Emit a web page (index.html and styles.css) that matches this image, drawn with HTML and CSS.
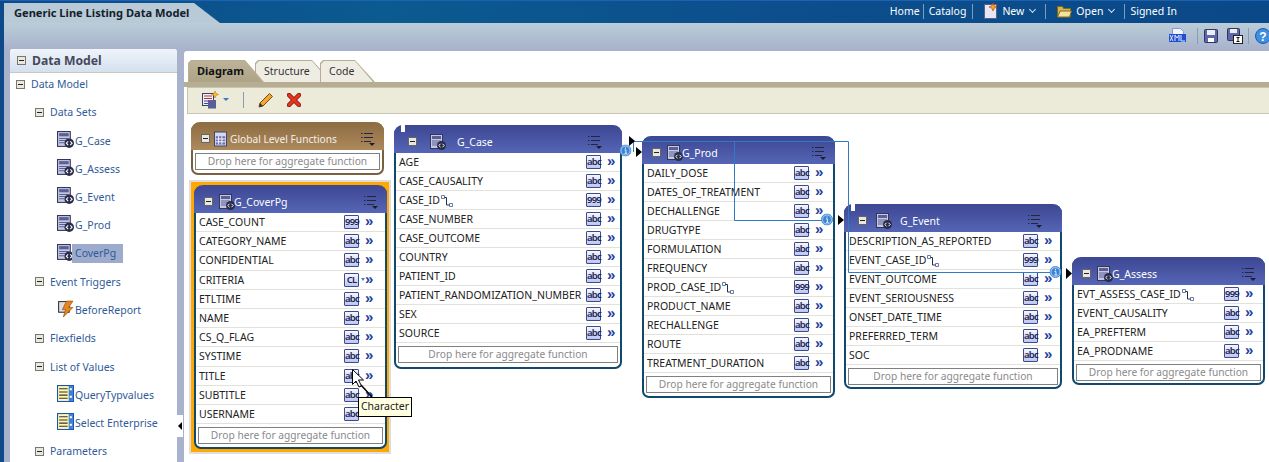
FILE: index.html
```html
<!DOCTYPE html>
<html lang="en">
<head>
  <meta charset="UTF-8" />
  <title>Generic Line Listing Data Model</title>
  <link rel="stylesheet" href="styles.css">
</head>
<body>

  <svg class="defs" width="0" height="0">
    <symbol id="i-dataset" viewBox="0 0 16 16">
      <rect x="0.500" y="0.500" width="12" height="14" fill="#c5c8e0" stroke="#34375c"/>
      <rect x="2" y="2" width="9" height="3" fill="#5a6096"/>
      <path d="M2 7h9M2 9h9M2 11h5" stroke="#5a6096"/>
      <circle cx="11.500" cy="11.500" r="4.500" fill="#2a2d4a"/>
      <path d="M10.500 9.800 8.800 11.500l1.700 1.700M12.500 9.800l1.700 1.700-1.700 1.700" fill="none" stroke="#fff"/>
    </symbol>
    <symbol id="i-menu" viewBox="0 0 14 14">
      <path d="M0 1.500h1.500M3 1.500h9M0 5.500h1.500M3 5.500h9M0 9.500h1.500M3 9.500h7" stroke="#23263f"/>
      <path d="M8 11h6l-3 3z" fill="#1c1c2a"/>
    </symbol>
    <symbol id="i-values" viewBox="0 0 16 16">
      <rect x="0.500" y="0.500" width="15" height="15" fill="#fff7b0" stroke="#1556b8"/>
      <rect x="11" y="1" width="4" height="14" fill="#3d7fd6"/>
      <path d="M2 3.500h8M2 6.500h8M2 9.500h8M2 12.500h8" stroke="#333"/>
      <path d="M12 4h2M12 11h2" stroke="#fff" stroke-width="2"/>
    </symbol>
    <symbol id="i-info" viewBox="0 0 14 14">
      <circle cx="7" cy="7" r="6.500" fill="#8fbcec" stroke="#3f82c8"/>
      <circle cx="7" cy="7" r="4.500" fill="#3a83d6"/>
      <path d="M7 3.500v1.500M5.800 6.300H7.500V10M5.800 10.300h3.200" stroke="#fff" fill="none"/>
    </symbol>
    <symbol id="i-key" viewBox="0 0 12 12">
      <path d="M.5.500h3v3h-3zM8.500 8.500h3v3h-3z" fill="#fff" stroke="#6a7aa8"/>
      <path d="M3.500 2.500h2v7.500h3" fill="none" stroke="#22304f"/>
    </symbol>
  </svg>

  <header class="topbar">
    <div class="doc-tab">Generic Line Listing Data Model</div>
    <nav class="global-nav">
      <a class="nav-home">Home</a>
      <a class="nav-catalog">Catalog</a>
      <a class="with-icon">
        <svg width="14" height="16" viewBox="0 0 14 16"><path d="M.5 1.500h12v14H.5z" fill="#e6e6f4" stroke="#5a5f8c"/><path d="M9 0l1.200 2.800L13 4l-2.800 1.200L9 8 7.800 5.200 5 4l2.800-1.200z" fill="#f4a51c" stroke="#b23a1a" stroke-width=".6"/></svg>
        New <span class="caret"></span>
      </a>
      <a class="with-icon">
        <svg width="15" height="13" viewBox="0 0 15 13"><path d="M.5 12V1.500h5l1 2h7V12z" fill="#d8b64c" stroke="#7d6a24"/><path d="M.5 12l2.500-6h11.500l-2 6z" fill="#f3e39a" stroke="#7d6a24"/></svg>
        Open <span class="caret"></span>
      </a>
      <a class="nav-last">Signed In</a>
    </nav>
  </header>

  <div class="action-band">
    <svg class="ico-xml" width="17" height="15" viewBox="0 0 17 15"><path d="M3.500.5h8l3 3v4h-11z" fill="#f2f4fb" stroke="#8d97c8"/><rect x="0" y="6" width="17" height="8" fill="#1f4fd0"/><path d="M1 7l3 6M4 7l-3 6M6 13V7l2 3 2-3v6M12 7v6h4" stroke="#dfe8ff" fill="none"/></svg>
    <span class="band-sep"></span>
    <svg class="ico-save" width="14" height="14" viewBox="0 0 14 14"><rect x=".5" y=".5" width="13" height="13" rx="1" fill="#6066aa" stroke="#30345e"/><rect x="3" y="1" width="8" height="5" fill="#eceef8"/><rect x="4" y="9" width="6" height="4" fill="#fff"/></svg>
    <svg class="ico-saveas" width="16" height="16" viewBox="0 0 16 16"><rect x=".5" y=".5" width="12" height="12" rx="1" fill="#6066aa" stroke="#30345e"/><rect x="3" y="1" width="7" height="4" fill="#eceef8"/><rect x="6.500" y="7.500" width="9" height="8" fill="#fff" stroke="#222"/><path d="M9.500 9.500h3M11 9.500v4M9.500 13.500h3" stroke="#111"/></svg>
    <span class="band-sep"></span>
    <svg class="ico-help" width="15" height="16" viewBox="0 0 15 16"><circle cx="8" cy="8" r="7.500" fill="#3f8ee0" stroke="#1e5ca8"/><text x="8" y="12.500" text-anchor="middle" class="help-q">?</text></svg>
  </div>

  <div class="workspace">
    <aside class="side-panel">
      <h2 class="panel-head"><span class="box"></span>Data Model</h2>
      <ul class="tree">
        <li class="lvl0"><span class="box"></span>Data Model</li>
        <li class="lvl1"><span class="box"></span>Data Sets</li>
        <li class="lvl2"><svg><use href="#i-dataset"/></svg><span>G_Case</span></li>
        <li class="lvl2"><svg><use href="#i-dataset"/></svg><span>G_Assess</span></li>
        <li class="lvl2"><svg><use href="#i-dataset"/></svg><span>G_Event</span></li>
        <li class="lvl2"><svg><use href="#i-dataset"/></svg><span>G_Prod</span></li>
        <li class="lvl2"><svg><use href="#i-dataset"/></svg><span class="selected">CoverPg</span></li>
        <li class="lvl1"><span class="box"></span>Event Triggers</li>
        <li class="lvl2">
          <svg viewBox="0 0 16 16"><rect x="1.500" y="1.500" width="10" height="10" fill="#dcdcec" stroke="#333"/><path d="M9 1h6l-4 6h4L6 16l2-7H5z" fill="#e8861c" stroke="#8a4a10" stroke-width=".6"/></svg>
          <span>BeforeReport</span>
        </li>
        <li class="lvl1"><span class="box"></span>Flexfields</li>
        <li class="lvl1"><span class="box"></span>List of Values</li>
        <li class="lvl2"><svg><use href="#i-values"/></svg><span>QueryTypvalues</span></li>
        <li class="lvl2"><svg><use href="#i-values"/></svg><span>Select Enterprise</span></li>
        <li class="lvl1"><span class="box"></span>Parameters</li>
      </ul>
    </aside>
    <div class="splitter"><span class="collapse-tab"></span></div>

    <main class="editor">
      <div class="tabs">
        <a class="tab active">Diagram</a>
        <a class="tab">Structure</a>
        <a class="tab">Code</a>
      </div>
      <div class="toolbar">
        <svg width="17" height="18" viewBox="0 0 17 18"><rect x=".5" y="2.500" width="11" height="12" fill="#eef0fa" stroke="#3c3f66"/><path d="M2 5h8M2 7.500h8" stroke="#c03030"/><path d="M2 10h8M2 12.500h8" stroke="#3050a0"/><rect x="6" y="9" width="8" height="8.500" fill="#5a6096"/><path d="M13 0l1 2.500 2.500 1-2.500 1-1 2.500-1-2.500-2.500-1 2.500-1z" fill="#f8c21c" stroke="#c06a10" stroke-width=".5"/></svg>
        <span class="caret blue"></span>
        <span class="tool-sep"></span>
        <svg class="ico-pencil" width="16" height="16" viewBox="0 0 16 16"><path d="M1 15l1-4L11.500 1.500l3 3L5 14z" fill="#f0a830" stroke="#7a4a10"/><path d="M1 15l1-4 3 3z" fill="#333"/></svg>
        <svg class="ico-delete" width="14" height="14" viewBox="0 0 14 14"><path d="M2 2l10 10M12 2L2 12" stroke="#7a1410" stroke-width="4.500" stroke-linecap="round"/><path d="M2 2l10 10M12 2L2 12" stroke="#e8341c" stroke-width="3" stroke-linecap="round"/></svg>
      </div>

      <div class="canvas">
        <section class="node brown global-fn">
          <header class="node-head">
            <span class="box"></span>
            <svg class="head-ico" viewBox="0 0 14 16"><rect x=".5" y=".5" width="13" height="15" fill="#d5d8f0" stroke="#3c3f66"/><rect x="2" y="5" width="10" height="9" fill="#6a70b0"/><path d="M5 5v9M8.500 5v9M2 8h10M2 11h10" stroke="#fff"/></svg>
            <span class="node-title">Global Level Functions</span>
            <svg class="menu"><use href="#i-menu"/></svg>
          </header>
          <div class="drop">Drop here for aggregate function</div>
        </section>

        <div class="cover-halo"></div>
        <section class="node cover">
          <header class="node-head">
            <span class="box"></span>
            <svg class="head-ico"><use href="#i-dataset"/></svg>
            <span class="node-title">G_CoverPg</span>
            <svg class="menu"><use href="#i-menu"/></svg>
          </header>
          <ul class="fields">
            <li><span class="fname">CASE_COUNT</span><span class="type">999</span></li>
            <li><span class="fname">CATEGORY_NAME</span><span class="type">abc</span></li>
            <li><span class="fname">CONFIDENTIAL</span><span class="type">abc</span></li>
            <li><span class="fname">CRITERIA</span><span class="type cl">CL</span></li>
            <li><span class="fname">ETLTIME</span><span class="type">abc</span></li>
            <li><span class="fname">NAME</span><span class="type">abc</span></li>
            <li><span class="fname">CS_Q_FLAG</span><span class="type">abc</span></li>
            <li><span class="fname">SYSTIME</span><span class="type">abc</span></li>
            <li><span class="fname">TITLE</span><span class="type">abc</span></li>
            <li><span class="fname">SUBTITLE</span><span class="type">abc</span></li>
            <li><span class="fname">USERNAME</span><span class="type">abc</span></li>
          </ul>
          <div class="drop">Drop here for aggregate function</div>
        </section>

        <section class="node case">
          <header class="node-head wide">
            <span class="box"></span>
            <svg class="head-ico"><use href="#i-dataset"/></svg>
            <span class="node-title">G_Case</span>
            <svg class="menu"><use href="#i-menu"/></svg>
          </header>
          <ul class="fields">
            <li><span class="fname">AGE</span><span class="type">abc</span></li>
            <li><span class="fname">CASE_CAUSALITY</span><span class="type">abc</span></li>
            <li><span class="fname">CASE_ID<svg class="key"><use href="#i-key"/></svg></span><span class="type">999</span></li>
            <li><span class="fname">CASE_NUMBER</span><span class="type">abc</span></li>
            <li><span class="fname">CASE_OUTCOME</span><span class="type">abc</span></li>
            <li><span class="fname">COUNTRY</span><span class="type">abc</span></li>
            <li><span class="fname">PATIENT_ID</span><span class="type">abc</span></li>
            <li><span class="fname">PATIENT_RANDOMIZATION_NUMBER</span><span class="type">abc</span></li>
            <li><span class="fname">SEX</span><span class="type">abc</span></li>
            <li><span class="fname">SOURCE</span><span class="type">abc</span></li>
          </ul>
          <div class="drop">Drop here for aggregate function</div>
        </section>

        <section class="node prod">
          <header class="node-head">
            <span class="box"></span>
            <svg class="head-ico"><use href="#i-dataset"/></svg>
            <span class="node-title">G_Prod</span>
            <svg class="menu"><use href="#i-menu"/></svg>
          </header>
          <ul class="fields">
            <li><span class="fname">DAILY_DOSE</span><span class="type">abc</span></li>
            <li><span class="fname">DATES_OF_TREATMENT</span><span class="type">abc</span></li>
            <li><span class="fname">DECHALLENGE</span><span class="type">abc</span></li>
            <li><span class="fname">DRUGTYPE</span><span class="type">abc</span></li>
            <li><span class="fname">FORMULATION</span><span class="type">abc</span></li>
            <li><span class="fname">FREQUENCY</span><span class="type">abc</span></li>
            <li><span class="fname">PROD_CASE_ID<svg class="key"><use href="#i-key"/></svg></span><span class="type">999</span></li>
            <li><span class="fname">PRODUCT_NAME</span><span class="type">abc</span></li>
            <li><span class="fname">RECHALLENGE</span><span class="type">abc</span></li>
            <li><span class="fname">ROUTE</span><span class="type">abc</span></li>
            <li><span class="fname">TREATMENT_DURATION</span><span class="type">abc</span></li>
          </ul>
          <div class="drop">Drop here for aggregate function</div>
        </section>

        <section class="node event">
          <header class="node-head wide">
            <span class="box"></span>
            <svg class="head-ico"><use href="#i-dataset"/></svg>
            <span class="node-title">G_Event</span>
            <svg class="menu"><use href="#i-menu"/></svg>
          </header>
          <ul class="fields">
            <li><span class="fname">DESCRIPTION_AS_REPORTED</span><span class="type">abc</span></li>
            <li><span class="fname">EVENT_CASE_ID<svg class="key"><use href="#i-key"/></svg></span><span class="type">999</span></li>
            <li><span class="fname">EVENT_OUTCOME</span><span class="type">abc</span></li>
            <li><span class="fname">EVENT_SERIOUSNESS</span><span class="type">abc</span></li>
            <li><span class="fname">ONSET_DATE_TIME</span><span class="type">abc</span></li>
            <li><span class="fname">PREFERRED_TERM</span><span class="type">abc</span></li>
            <li><span class="fname">SOC</span><span class="type">abc</span></li>
          </ul>
          <div class="drop">Drop here for aggregate function</div>
        </section>

        <section class="node assess">
          <header class="node-head">
            <span class="box"></span>
            <svg class="head-ico"><use href="#i-dataset"/></svg>
            <span class="node-title">G_Assess</span>
            <svg class="menu"><use href="#i-menu"/></svg>
          </header>
          <ul class="fields">
            <li><span class="fname">EVT_ASSESS_CASE_ID<svg class="key"><use href="#i-key"/></svg></span><span class="type">999</span></li>
            <li><span class="fname">EVENT_CAUSALITY</span><span class="type">abc</span></li>
            <li><span class="fname">EA_PREFTERM</span><span class="type">abc</span></li>
            <li><span class="fname">EA_PRODNAME</span><span class="type">abc</span></li>
          </ul>
          <div class="drop">Drop here for aggregate function</div>
        </section>

        <!-- links between data sets, viewBox is in window coordinates -->
        <svg class="links" width="1082" height="348" viewBox="187 114 1082 348">
          <path d="M633.500 152V141.500H848.500V272.500H1056M734.500 141.500V220.500H828" fill="none" stroke="#2f7cc4"/>
          <path d="M629 136l6 5-6 5zM636 147l6 5-6 5zM838 215l6 5-6 5zM1066 268l6 5.500-6 5.500z" fill="#000"/>
          <use href="#i-info" x="619.500" y="144.500" width="12" height="12"/>
          <use href="#i-info" x="821" y="213.500" width="12" height="12"/>
          <use href="#i-info" x="1049.500" y="266" width="12" height="12"/>
          <path d="M352.500 369.500v15l3.500-3.500 3 6 2.500-1-3-6h5z" fill="#fff" stroke="#000" stroke-linejoin="round"/>
          <path d="M361 385l11 12" stroke="#000" stroke-width="1.500"/>
        </svg>

        <div class="tooltip">Character</div>
      </div>
    </main>
  </div>

</body>
</html>
```

FILE: styles.css
```css
* {
  box-sizing: border-box;
}

html, body {
  margin: 0;
  height: 462px;
  overflow: hidden;
}

body {
  font-family: "Noto Sans", "DejaVu Sans", sans-serif;
  font-size: 10.5px;
  color: #111;
  background-color: #0d4a8a;
}

ul {
  list-style: none;
  margin: 0;
  padding: 0;
}

.defs {
  position: absolute;
}

/* top bar */
.topbar {
  height: 23px;
  display: flex;
  justify-content: space-between;
  background: linear-gradient(90deg, #0d4a8a 0, #0b5a90 30%, #0c4f8c 60%, #0b4888 100%);
  border-top: 1px solid #1c62b4;
}

.doc-tab {
  width: 216px;
  margin-left: 4px;
  margin-top: 2px;
  padding: 2px 0 0 10px;
  font-size: 11.1px;
  font-weight: bold;
  color: #14202c;
  background-color: #b8cad6;
  clip-path: polygon(0 0, 190px 0, 100% 100%, 0 100%);
}

.global-nav {
  display: flex;
  align-items: center;
  padding-right: 92px;
  padding-bottom: 2px;
  color: #fff;
}

.global-nav a {
  display: flex;
  align-items: center;
  gap: 4px;
  height: 15px;
  border-right: 1px solid #7d9cc0;
}

.global-nav .nav-home {
  padding: 0 3px 0 0;
}

.global-nav .nav-catalog {
  padding: 0 6px 0 5px;
}

.global-nav a.with-icon {
  padding: 0 8px 0 11px;
}

.global-nav .nav-last {
  padding-left: 5px;
  border-right: 0;
}

.caret {
  width: 5px;
  height: 5px;
  margin: -3px 2px 0 2px;
  border-right: 1px solid #cfe0f2;
  border-bottom: 1px solid #cfe0f2;
  transform: rotate(45deg);
}

.caret.blue {
  width: 0;
  height: 0;
  margin: 0;
  transform: none;
  border: 3px solid transparent;
  border-top: 3px solid #3a78c0;
  border-bottom: 0;
}

.action-band {
  height: 27px;
  margin-left: 4px;
  padding-bottom: 2px;
  display: flex;
  align-items: center;
  justify-content: flex-end;
  background: linear-gradient(180deg, #bacdd8 0, #a8b2cc 100%);
}

.band-sep {
  width: 1px;
  height: 16px;
  background-color: #8f9ab0;
}

.ico-xml {
  margin-right: 11px;
}

.ico-save {
  margin-left: 6px;
  margin-right: 9px;
}

.ico-saveas {
  margin-right: 5px;
}

.ico-help {
  margin-left: 6px;
  margin-right: -1px;
}

.help-q {
  font: bold 12px "Liberation Sans", sans-serif;
  fill: #fff;
}

/* panels */
.workspace {
  height: 412px;
  margin-left: 4px;
  display: flex;
  background-color: #a8b2cc;
}

.side-panel {
  width: 167px;
  margin-left: 6px;
  margin-top: -1px;
  background-color: #fff;
  border-radius: 3px 3px 0 0;
  overflow: hidden;
}

.panel-head {
  height: 24px;
  margin: 0;
  display: flex;
  align-items: center;
  padding-left: 7px;
  gap: 6px;
  font-size: 12.2px;
  color: #444a5c;
  background: linear-gradient(180deg, #f0f4fa 0, #d4e0ee 100%);
  border-bottom: 1px solid #c8c8b8;
}

.box {
  flex: none;
  position: relative;
  width: 9px;
  height: 9px;
  background-color: #e8e8e0;
  border: 1px solid #77776c;
}

.box::after {
  content: "";
  position: absolute;
  left: 1px;
  right: 1px;
  top: 3px;
  height: 1px;
  background-color: #222;
}

.tree {
  margin-top: -1px;
  color: #305a98;
}

.tree li {
  height: 24px;
  margin-bottom: 4.25px;
  display: flex;
  align-items: center;
}

.tree svg {
  width: 17px;
  height: 17px;
  flex: none;
  margin-top: -3px;
}

.lvl0 {
  padding-left: 6px;
  gap: 6px;
}

.lvl1 {
  padding-left: 25px;
  gap: 6px;
}

.lvl2 {
  padding-left: 47px;
  gap: 1px;
}

.selected {
  height: 19px;
  line-height: 18px;
  padding: 0 7px 0 3px;
  margin-left: -3px;
  background-color: #9dabcc;
}

.splitter {
  width: 7px;
  display: flex;
  align-items: flex-end;
}

.collapse-tab {
  position: relative;
  top: -25px;
  width: 6px;
  height: 22px;
  background-color: #fff;
}

.collapse-tab::after {
  content: "";
  position: absolute;
  left: 1px;
  top: 7px;
  border: 4px solid transparent;
  border-right: 4px solid #000;
  border-left: 0;
}

.editor {
  flex: 1;
  min-width: 0;
  margin-top: 1px;
  background-color: #fff;
  border-radius: 3px 0 0 0;
}

.tabs {
  display: flex;
  height: 36px;
  padding: 9px 0 0 4px;
  border-bottom: 5px solid #b7ad92;
}

.tab {
  position: relative;
  isolation: isolate;
  width: 77px;
  margin-left: -9px;
  padding: 4px 0 0 9px;
  color: #333;
  background-color: #b7ad92;
  clip-path: polygon(3px 0, 57px 0, 100% 100%, 0 100%, 0 3px);
}

.tab::before {
  content: "";
  position: absolute;
  z-index: -1;
  inset: 1px 0 0 1px;
  background-color: #efece4;
  clip-path: polygon(3px 0, 56px 0, calc(100% - 2px) 100%, 0 100%, 0 3px);
}

.tab.active {
  z-index: 2;
  width: 76px;
  margin-left: 0;
  padding-top: 3px;
  font-size: 11px;
  font-weight: bold;
  color: #111;
}

.tab.active::before {
  background: linear-gradient(180deg, #bdb399 0, #ada386 100%);
}

.tab:last-child {
  width: 55px;
  margin-left: -12px;
  clip-path: polygon(3px 0, 35px 0, 100% 100%, 0 100%, 0 3px);
  z-index: 1;
}

.tab:last-child::before {
  clip-path: polygon(3px 0, 34px 0, calc(100% - 2px) 100%, 0 100%, 0 3px);
}

.toolbar {
  height: 27px;
  margin-left: 3px;
  display: flex;
  align-items: center;
  padding-left: 14px;
  padding-bottom: 2px;
  gap: 4px;
  background-color: #ecead8;
  border-top: 1px solid #c8c4b0;
  border-left: 1px solid #c8c4b0;
  border-bottom: 1px solid #c8c4b0;
}

.tool-sep {
  width: 1px;
  height: 16px;
  margin: 0 10px;
  background-color: #8f9ab0;
}

.ico-delete {
  margin-left: 9px;
}

/* diagram */
.canvas {
  position: relative;
  height: 348px;
  overflow: hidden;
  margin-left: 3px;
}

.node {
  position: absolute;
  background-color: #fff;
  border: 2px solid #0f4a6e;
  border-top: 0;
  border-radius: 9px 9px 7px 7px;
}

.node-head {
  position: relative;
  height: 28px;
  margin: 0 -2px;
  display: flex;
  align-items: center;
  padding: 5px 9px 0 10px;
  color: #fff;
  background: linear-gradient(180deg, #3d4793 0, #5565b5 100%);
  border-radius: 9px 9px 0 0;
}

.node-head.wide {
  padding-left: 14px;
  padding-right: 20px;
}

/* little gap the original leaves in the top edge of the wide nodes */
.node-head.wide::before {
  content: "";
  position: absolute;
  left: 7px;
  top: 0;
  width: 4px;
  height: 7px;
  background-color: #fff;
}

.node-head.wide .head-ico {
  margin-left: 13px;
}

.node-head.wide .node-title {
  margin-left: 11px;
}

.event .node-head.wide .head-ico {
  margin-left: 9px;
}

.event .node-head.wide .node-title {
  margin-left: 8px;
}

.node-head .box {
  background-color: #e8e8e0;
  border-color: #666;
}

.head-ico {
  width: 16px;
  height: 16px;
  flex: none;
  margin-left: 6px;
}

.node-title {
  flex: 1;
  margin-left: -1px;
}

.menu {
  width: 14px;
  height: 14px;
  flex: none;
}

.brown {
  left: 4px;
  top: 8px;
  width: 193px;
  height: 53px;
  border-color: #7b5f3e;
}

.brown .node-head {
  background: linear-gradient(180deg, #8d6b42 0, #ad8a5c 100%);
}

.brown .head-ico {
  width: 13px;
  margin-left: 4px;
}

.brown .node-title {
  margin-left: 3px;
  font-size: 10.2px;
  color: #f4f0ea;
}

.drop {
  height: 17px;
  margin: 3px 2px 0;
  border: 1px solid #808080;
  color: #8a8a8a;
  font-size: 10.2px;
  text-align: center;
  line-height: 14px;
}

.cover-halo {
  position: absolute;
  left: 4px;
  top: 68px;
  width: 198px;
  height: 270px;
  background-color: #ffa800;
  outline: 2px solid #ddd;
}

.cover {
  left: 7px;
  top: 71px;
  width: 193px;
  height: 264px;
}

.case {
  left: 207px;
  top: 11px;
  width: 228px;
  height: 244px;
}

.prod {
  left: 455px;
  top: 22px;
  width: 193px;
  height: 262px;
}

.event {
  left: 657px;
  top: 90px;
  width: 218px;
  height: 185px;
}

.assess {
  left: 885px;
  top: 143px;
  width: 193px;
  height: 128px;
}

.fields li {
  height: 19px;
  display: flex;
  align-items: center;
  padding: 0 8px 0 3px;
  border-bottom: 1px solid #e2e2da;
}

.cover .fields li {
  height: 19.2px;
}

.case .fields li {
  padding-right: 1px;
}

.prod .fields li,
.assess .fields li {
  padding-right: 6px;
}

.event .fields li {
  padding-right: 4px;
}

.fields li::after {
  content: "\00bb";
  flex: none;
  width: 12px;
  margin: -3px 0 0 6px;
  font: bold 15px/15px "Liberation Sans", sans-serif;
  color: #22409c;
}

.fname {
  flex: 1;
  display: flex;
  align-items: flex-start;
  white-space: nowrap;
  color: #222;
}

.key {
  width: 12px;
  height: 12px;
  margin: 2px 0 0 1px;
}

.type {
  position: relative;
  flex: none;
  width: 15px;
  height: 14px;
  border: 1px solid #3c4a90;
  border-radius: 1px;
  background: linear-gradient(180deg, #f6f7fe 0, #bcc6f0 100%);
  font: 600 9.5px/12px "Noto Sans", sans-serif;
  letter-spacing: -.8px;
  text-align: center;
  color: #1c2456;
}

.type.cl::after {
  content: "";
  position: absolute;
  left: 16px;
  top: 4px;
  border: 2px solid transparent;
  border-top: 3px solid #3a8ab0;
  border-bottom: 0;
}

.links {
  position: absolute;
  left: 0;
  top: 0;
  pointer-events: none;
}

.tooltip {
  position: absolute;
  left: 171px;
  top: 283px;
  width: 54px;
  height: 20px;
  text-align: center;
  line-height: 17px;
  background-color: #ffffe1;
  border: 1px solid #000;
  color: #222;
}
```
